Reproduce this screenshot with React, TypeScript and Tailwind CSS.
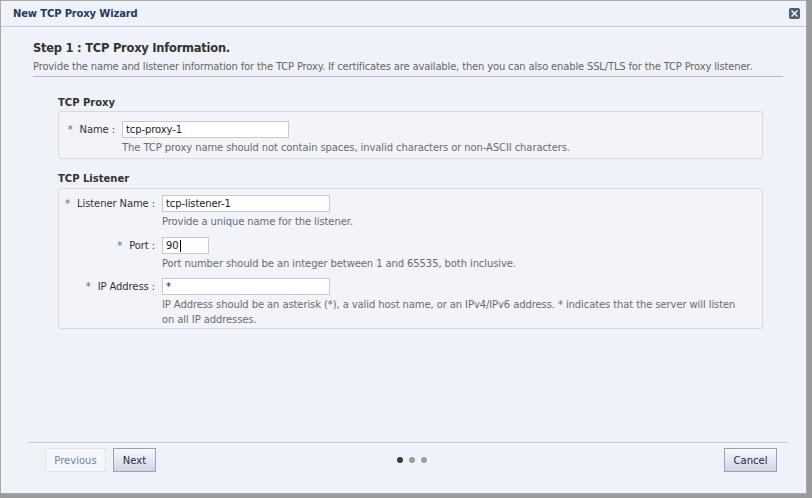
import React from 'react';

const font = { fontFamily: '"DejaVu Sans", Verdana, sans-serif' };

function Field({ label, labelWidth, inputWidth, value, help, caret }: any) {
  return (
    <div className="flex items-start">
      <div className={`${labelWidth} flex shrink-0 items-center justify-end whitespace-nowrap pr-[7px] text-[10px] leading-[17px] tracking-[-0.1px] text-[#333]`}>
        <span className="mr-[7px] text-[#4b6b94]">*</span>
        <span>{label} :</span>
      </div>
      <div className="flex flex-col">
        <div className={`${inputWidth} flex h-[17px] items-center border border-[#c5c9d1] bg-white px-[3px] text-[10px] tracking-[-0.1px] text-[#222]`}>
          {value}
          {caret && <span className="ml-px h-[12px] w-px bg-black" />}
        </div>
        <div className="mt-[2px] text-[10px] leading-[15px] tracking-[-0.1px] text-[#6b6b6b]">{help}</div>
      </div>
    </div>
  );
}

export default function App() {
  return (
    <div style={font} className="h-[498px] w-[812px] overflow-hidden bg-white">
      <div className="flex h-[498px] w-[812px] flex-col pb-[4px] pr-[5px] shadow-[inset_-5px_-4px_0_#9a9a9a]">
        <div className="flex h-full flex-col border border-[#a8a8a8] bg-[#eff2f8]">
          {/* title bar */}
          <div className="flex h-[26px] shrink-0 items-center justify-between border-b border-[#c3c8d6] pl-[12px] pr-[6px]">
            <span className="text-[10px] font-bold tracking-[-0.15px] text-[#1f3a60]">New TCP Proxy Wizard</span>
            <button className="flex h-[11px] w-[11px] items-center justify-center rounded-[2px] bg-[#4e5d72]">
              <svg width="7" height="7" viewBox="0 0 7 7">
                <path d="M0.5 0.5L6.5 6.5M6.5 0.5L0.5 6.5" stroke="white" strokeWidth="1.3" />
              </svg>
            </button>
          </div>

          {/* body */}
          <div className="flex flex-1 flex-col pl-[27px] pr-[18px] pt-[13px]">
            <div className="mx-[5px] flex flex-col">
              <div className="text-[11.5px] font-bold leading-[17px] tracking-[-0.25px] text-[#333]">Step 1 : TCP Proxy Information.</div>
              <div className="mt-[2px] whitespace-nowrap border-b border-[#b9bcc4] pb-[2px] text-[10px] leading-[15px] tracking-[-0.17px] text-[#666]">
                Provide the name and listener information for the TCP Proxy. If certificates are available, then you can also enable SSL/TLS for the TCP Proxy listener.
              </div>
            </div>

            <div className="ml-[30px] mr-[25px] mt-[18px] flex flex-col">
              <div className="mb-[1px] text-[10px] font-bold leading-[15px] text-[#333]">TCP Proxy</div>
              <div className="rounded-[3px] border border-[#d6d9e0] bg-[#f2f4f9] pb-[3px] pt-[9px]">
                <Field
                  label="Name"
                  labelWidth="w-[63px]"
                  inputWidth="w-[167px]"
                  value="tcp-proxy-1"
                  help="The TCP proxy name should not contain spaces, invalid characters or non-ASCII characters."
                />
              </div>

              <div className="mb-[2px] mt-[12px] text-[10px] font-bold leading-[15px] text-[#333]">TCP Listener</div>
              <div className="flex flex-col gap-[8px] rounded-[3px] border border-[#d6d9e0] bg-[#f2f4f9] pb-[1px] pt-[6px]">
                <Field
                  label="Listener Name"
                  labelWidth="w-[103px]"
                  inputWidth="w-[168px]"
                  value="tcp-listener-1"
                  help={<>Provide a <span className="text-[#5a6f94]">unique</span> name for the listener.</>}
                />
                <Field
                  label="Port"
                  labelWidth="w-[103px]"
                  inputWidth="w-[47px]"
                  value="90"
                  caret
                  help="Port number should be an integer between 1 and 65535, both inclusive."
                />
                <div className="-mt-px">
                  <Field
                    label="IP Address"
                    labelWidth="w-[103px]"
                    inputWidth="w-[168px]"
                    value="*"
                    help={
                      <>
                        IP Address should be an asterisk (*), a valid host name, or an IPv4/IPv6 address. * indicates that the server will listen
                        <br />
                        on all IP addresses.
                      </>
                    }
                  />
                </div>
              </div>
            </div>

            <div className="flex-1" />

            {/* footer */}
            <div className="flex items-center border-t border-[#c3c8d2] pb-[21px] pl-[17px] pr-[11px] pt-[5px]">
              <div className="flex w-[352px] gap-[7px]">
                <button className="h-[24px] w-[61px] border border-[#e2e5ec] bg-[#f4f6fa] text-[10px] text-[#6e84a8]">Previous</button>
                <button className="h-[24px] w-[43px] border border-[#9aa3b3] bg-gradient-to-b from-[#f7f9fc] to-[#cdd5e6] text-[10px] text-[#1c2c4e]">Next</button>
              </div>
              <div className="flex gap-[6px]">
                <span className="h-[6px] w-[6px] rounded-full bg-[#3a3a3a]" />
                <span className="h-[6px] w-[6px] rounded-full bg-[#9c9c9c]" />
                <span className="h-[6px] w-[6px] rounded-full bg-[#9c9c9c]" />
              </div>
              <div className="flex flex-1 justify-end">
                <button className="h-[24px] w-[53px] border border-[#9aa3b3] bg-gradient-to-b from-[#f7f9fc] to-[#cdd5e6] text-[10px] text-[#1c2c4e]">Cancel</button>
              </div>
            </div>
          </div>
        </div>
      </div>
    </div>
  );
}
